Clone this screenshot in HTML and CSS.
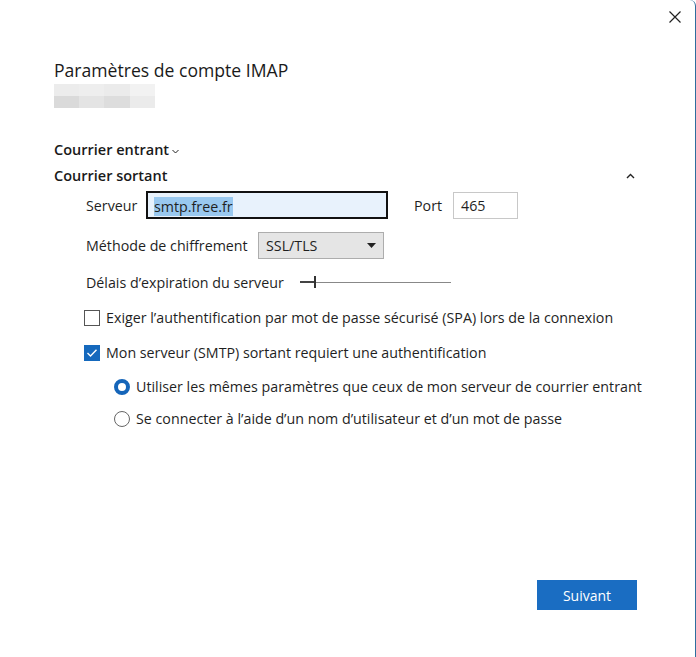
FILE: index.html
```html
<!DOCTYPE html>
<html lang="fr">
<head>
<meta charset="utf-8">
<link rel="stylesheet" href="styles.css">
</head>
<body>
<div class="window">
  <button class="close" aria-label="Fermer">
    <svg width="12" height="12" viewBox="0 0 12 12"><path d="M0.5 0.5L11.5 11.5M11.5 0.5L0.5 11.5" stroke="#222" stroke-width="1.2" fill="none"/></svg>
  </button>
  <div class="content">
    <h1 class="title">Paramètres de compte IMAP</h1>
    <div class="blur">
      <span class="c1"></span><span class="c2"></span><span class="c3"></span><span class="c4"></span>
      <span class="c5"></span><span class="c6"></span><span class="c7"></span><span class="c8"></span>
    </div>

    <div class="section-head first">
      <span>Courrier entrant</span>
      <svg class="chev" width="7" height="5" viewBox="0 0 7 5"><path d="M0.5 1L3.5 4L6.5 1" stroke="#222" stroke-width="1" fill="none"/></svg>
    </div>
    <div class="section-head second">
      <span>Courrier sortant</span>
      <svg class="caret" width="9" height="6" viewBox="0 0 9 6"><path d="M1 5L4.5 1.5L8 5" stroke="#222" stroke-width="1.4" fill="none"/></svg>
    </div>

    <div class="form">
      <div class="row server-row">
        <label class="lbl-server">Serveur</label>
        <div class="input-server"><span class="sel">smtp.free.fr</span></div>
        <label class="lbl-port">Port</label>
        <div class="input-port">465</div>
      </div>
      <div class="row enc-row">
        <label class="lbl-enc">Méthode de chiffrement</label>
        <div class="select">
          <span>SSL/TLS</span>
          <svg width="9" height="5" viewBox="0 0 9 5"><path d="M0 0H9L4.5 5Z" fill="#222"/></svg>
        </div>
      </div>
      <div class="row timeout-row">
        <label class="lbl-timeout">Délais d’expiration du serveur</label>
        <div class="slider">
          <span class="fill"></span><span class="thumb"></span><span class="track"></span>
        </div>
      </div>

      <div class="check-row spa">
        <span class="box"></span>
        <span>Exiger l’authentification par mot de passe sécurisé (SPA) lors de la connexion</span>
      </div>
      <div class="check-row auth">
        <span class="box checked">
          <svg width="12" height="10" viewBox="0 0 12 10"><path d="M1.5 5L4.5 8L10.5 1.8" stroke="#fff" stroke-width="1.4" fill="none"/></svg>
        </span>
        <span>Mon serveur (SMTP) sortant requiert une authentification</span>
      </div>
      <div class="radio-row r1">
        <span class="radio on"></span>
        <span>Utiliser les mêmes paramètres que ceux de mon serveur de courrier entrant</span>
      </div>
      <div class="radio-row r2">
        <span class="radio"></span>
        <span>Se connecter à l’aide d’un nom d’utilisateur et d’un mot de passe</span>
      </div>
    </div>

    <div class="footer">
      <button class="next">Suivant</button>
    </div>
  </div>
</div>
</body>
</html>
```
FILE: styles.css
```css
* { box-sizing: border-box; }
html, body { margin: 0; padding: 0; }
body {
  width: 696px;
  height: 657px;
  background: #fff;
  font-family: "Open Sans", "Noto Sans", sans-serif;
  color: #1f1f1f;
  font-size: 14.25px;
  overflow: hidden;
}
.window {
  position: relative;
  width: 696px;
  height: 657px;
  background: #fff;
  border-right: 1px solid #2e6e9e;
  border-top-right-radius: 6px;
}
.close {
  position: absolute;
  top: 10px;
  left: 668px;
  width: 14px;
  height: 14px;
  padding: 0;
  border: 0;
  background: none;
  display: flex;
  align-items: center;
  justify-content: center;
}
.content {
  padding: 58px 0 0 54px;
}
.title {
  margin: 0;
  font-size: 17.6px;
  font-weight: 400;
  line-height: 24px;
  color: #1a1a1a;
}
.blur {
  margin-top: 2px;
  width: 101px;
  height: 24px;
  display: grid;
  grid-template-columns: 25px 25px 26px 25px;
  grid-template-rows: 12px 12px;
}
.c1 { background: #ececec; } .c2 { background: #eeeeee; } .c3 { background: #ebebeb; } .c4 { background: #f2f2f2; }
.c5 { background: #dadada; } .c6 { background: #e4e4e4; } .c7 { background: #dddddd; } .c8 { background: #ebebeb; }

.section-head {
  display: flex;
  align-items: center;
  gap: 3px;
  font-weight: 600;
  font-size: 14.5px;
  line-height: 20px;
  color: #1a1a1a;
  width: 584px;
}
.section-head.first { margin-top: 32px; }
.section-head.second { margin-top: 6px; justify-content: space-between; }
.chev { margin-top: 2px; }
.caret { margin-right: 3px; }

.form { padding-left: 32px; }
.row { display: flex; align-items: center; }
.server-row { margin-top: 5px; height: 28px; }
.lbl-server { width: 60px; }
.input-server {
  width: 242px;
  height: 28px;
  border: 2px solid #111;
  background: #e8f2fc;
  padding: 2px 6px 0;
  display: flex;
  align-items: center;
}
.sel { background: #99c8ef; line-height: 19px; }
.lbl-port { margin-left: 26px; width: 39px; }
.input-port {
  width: 65px;
  height: 27px;
  border: 1px solid #c8c8c8;
  padding: 0 7px;
  display: flex;
  align-items: center;
}
.enc-row { margin-top: 13px; height: 27px; }
.lbl-enc { width: 172px; }
.select {
  width: 126px;
  height: 27px;
  background: #e5e5e5;
  border: 1px solid #adadad;
  display: flex;
  align-items: center;
  justify-content: space-between;
  padding: 0 7px 0 7px;
}
.timeout-row { margin-top: 9px; height: 28px; }
.lbl-timeout { width: 214px; }
.slider {
  position: relative;
  width: 151px;
  height: 12px;
  display: flex;
  align-items: center;
}
.slider .fill { width: 14px; height: 2px; background: #444; }
.slider .thumb { width: 2px; height: 12px; background: #333; }
.slider .track { flex: 1; height: 1px; background: #888; }

.check-row, .radio-row {
  display: flex;
  align-items: center;
  gap: 6px;
  line-height: 20px;
}
.check-row { margin-left: -2px; }
.check-row.spa { margin-top: 12px; }
.check-row.auth { margin-top: 15px; }
.box {
  width: 16px;
  height: 16px;
  border: 1px solid #555;
  background: #fff;
  display: flex;
  align-items: center;
  justify-content: center;
}
.box.checked { background: #1569bd; border-color: #1569bd; }
.radio-row { margin-left: 28px; gap: 6px; }
.radio-row.r1 { margin-top: 14px; }
.radio-row.r2 { margin-top: 12px; }
.radio {
  width: 16px;
  height: 16px;
  border-radius: 50%;
  border: 1px solid #666;
  background: #fff;
}
.radio.on { border: 4px solid #1565b9; }

.footer {
  margin-top: 151px;
  width: 583px;
  display: flex;
  justify-content: flex-end;
}
.next {
  width: 100px;
  height: 30px;
  border: 0;
  background: #1a6dc2;
  color: #fff;
  font-family: inherit;
  font-size: 14px;
  padding: 0;
}
```
